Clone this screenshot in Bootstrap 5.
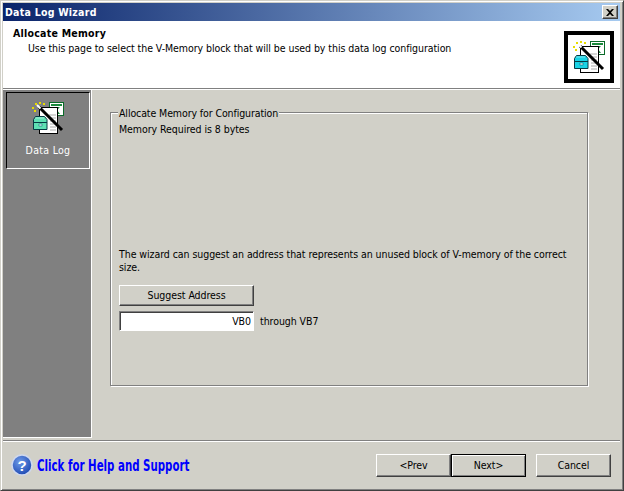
<!DOCTYPE html>
<html lang="en">
<head>
<meta charset="utf-8">
<title>Data Log Wizard</title>
<link href="https://cdn.jsdelivr.net/npm/bootstrap@5.3.0/dist/css/bootstrap.min.css" rel="stylesheet">
<style>
html,body{margin:0;height:491px;overflow:hidden;background:#d1d0c8}
body{font:10.5px/13px "DejaVu Sans Condensed","Liberation Sans",sans-serif;letter-spacing:-.06px;color:#000;-webkit-font-smoothing:none}
.wiz-win{width:624px;height:491px;background:#d1d0c8;border:1px solid;border-color:#d1d0c8 #404040 #404040 #d1d0c8;box-shadow:inset 1px 1px 0 #fff,inset -1px -1px 0 #808080;padding:2px 3px 2px 2px}
.wiz-title{height:18px;flex:none;background:linear-gradient(90deg,#0a246a,#a6caf0);color:#fff;font-weight:700;padding:0 2px 0 2px;letter-spacing:.25px}
.wiz-close{width:16px;height:14px;background:#d1d0c8;border:1px solid;border-color:#fff #404040 #404040 #fff;box-shadow:inset -1px -1px 0 #808080}
.wiz-head{height:67px;flex:none;background:#fff;padding:6px 6px 0 10px}
.wiz-head b{display:block;margin-bottom:2px;letter-spacing:.25px}
.wiz-head .wiz-sub{padding-left:15px}
.wiz-logo{width:50px;height:52px;border:4px solid #000;background:#fff;margin:4px 0 0}
.wiz-rule{height:2px;flex:none;background:#808080;border-bottom:1px solid #fff}
.wiz-main{min-height:0}
.wiz-side{width:89px;flex:none;background:#808080;border-right:1px solid #fff;border-bottom:1px solid #fff;padding:2px 2px 0 3px;margin-bottom:2px}
.wiz-item{height:77px;border:1px solid;border-color:#000 #fff #fff #000;color:#fff;padding-top:9px;width:84px}
.wiz-item span{margin-top:10px;letter-spacing:.3px}
.wiz-pane{padding:22px 32px 52px 18px}
.wiz-group{height:274px;border:1px solid #808080;box-shadow:inset 1px 1px 0 #fff,1px 1px 0 #fff;padding:10px 8px 0}
.wiz-legend{position:absolute;top:-6px;left:7px;background:#d1d0c8;padding:0 1px;letter-spacing:-.1px}
.wiz-gap{height:112px}
.wiz-btn.btn{font:inherit;letter-spacing:inherit;color:#000;background:#d1d0c8;border:1px solid;border-color:#fff #404040 #404040 #fff;border-radius:0;box-shadow:inset -1px -1px 0 #808080;padding:0}
.wiz-suggest.btn{width:135px;height:21px;margin-top:11px;display:block}
.wiz-row{margin-top:5px}
.wiz-row span{margin-left:6px}
.wiz-input.form-control{width:135px;height:20px;font:inherit;letter-spacing:inherit;text-align:right;padding:0 2px;border:1px solid;border-color:#808080 #fff #fff #808080;border-radius:0;box-shadow:inset 1px 1px 0 #404040;background:#fff;color:#000}
.wiz-foot{height:46px;flex:none;padding:12px 9px 0 8px}
.wiz-help{color:#00f;font:700 16.5px/21px "DejaVu Sans Condensed","Liberation Sans Narrow",sans-serif;letter-spacing:0;display:inline-block;transform:scaleX(.69);transform-origin:0 50%;white-space:nowrap;margin-top:1px}
.wiz-nav.btn{width:75px;height:23px}
.wiz-nav.wiz-def{outline:1px solid #000;outline-offset:-1px;border-color:#000;box-shadow:inset 1px 1px 0 #fff,inset -1px -1px 0 #808080}
.wiz-space{margin-left:10px}
.wiz-teal{color:#5fe0b4}
.wiz-cyan{color:#19d3e6}
</style>
</head>
<body>
<svg width="0" height="0" class="position-absolute">
<symbol id="wand" viewBox="0 0 32 32">
<rect x="17.500" y=".5" width="14" height="13" fill="#fff" stroke="#0a6a28"/>
<path d="M19 2h11v2H19zM20 5h2l2 2 2-2h2l-3 3 3 4h-2l-2-2-2 2h-2l3-4z" fill="#1a8a3c"/>
<rect x="7.500" y="5.500" width="18" height="26" fill="#fff" stroke="#000"/>
<path d="M17 13h7M17 16h7M18 19h6M18 22h6M18 25h6M18 28h6" stroke="#aaa"/>
<path d="M7 0h2v2H7zM3 1h2v2H3zM11 1h2v2h-2zM0 5h2v2H0zM2 8h2v2H2zM9 7h2v2H9z" fill="#e8dc00"/>
<path d="M1.500 17.500l2-3h9l2.500 3v10H1.500z" fill="currentColor" stroke="#063a44"/>
<path d="M1.500 20.500h13.500" stroke="#063a44"/>
<path d="M3 16h9" stroke="#fff" stroke-opacity=".45"/>
<rect x="7" y="22" width="3" height="2" fill="#d8fbff" stroke="#06505e" stroke-width=".5"/>
<path d="M7 5l23 23" stroke="#000" stroke-width="3"/>
<path d="M5 3l3.500 3.500" stroke="#fff" stroke-width="2"/>
</symbol>
</svg>
<div class="wiz-win d-flex flex-column">
<div class="wiz-title d-flex align-items-center justify-content-between">
<span>Data Log Wizard</span>
<span class="wiz-close d-flex align-items-center justify-content-center">
<svg width="8" height="7" viewBox="0 0 8 7"><path d="M0 0h2l2 2 2-2h2L5 3.500 8 7H6L4 5 2 7H0l3-3.500z" fill="#000"/></svg>
</span>
</div>
<div class="wiz-head d-flex justify-content-between">
<div>
<b>Allocate Memory</b>
<div class="wiz-sub">Use this page to select the V-Memory block that will be used by this data log configuration</div>
</div>
<div class="wiz-logo d-flex align-items-center justify-content-center wiz-cyan">
<svg width="32" height="32"><use href="#wand"/></svg>
</div>
</div>
<div class="wiz-rule"></div>
<div class="wiz-main d-flex flex-grow-1">
<div class="wiz-side">
<div class="wiz-item d-flex flex-column align-items-center">
<svg width="32" height="32" class="wiz-teal"><use href="#wand"/></svg>
<span>Data Log</span>
</div>
</div>
<div class="wiz-pane flex-grow-1">
<div class="wiz-group position-relative">
<span class="wiz-legend">Allocate Memory for Configuration</span>
<div>Memory Required is 8 bytes</div>
<div class="wiz-gap"></div>
<div>The wizard can suggest an address that represents an unused block of V-memory of the correct size.</div>
<button type="button" class="btn wiz-btn wiz-suggest">Suggest Address</button>
<div class="d-flex align-items-center wiz-row">
<input class="form-control wiz-input" value="VB0" readonly>
<span>through VB7</span>
</div>
</div>
</div>
</div>
<div class="wiz-rule"></div>
<div class="wiz-foot d-flex align-items-start">
<svg width="22" height="22" viewBox="0 0 22 22" class="me-1"><defs><radialGradient id="hb" cx=".4" cy=".35" r=".7"><stop offset="0" stop-color="#6f9be8"/><stop offset="1" stop-color="#1a45b0"/></radialGradient></defs><circle cx="11" cy="11" r="10" fill="url(#hb)" stroke="#cfd8ee" stroke-width="1.500"/><text x="11" y="16.500" text-anchor="middle" font-family="Liberation Sans" font-weight="700" font-size="15" fill="#fff">?</text></svg>
<span class="wiz-help">Click for Help and Support</span>
<div class="ms-auto d-flex">
<button type="button" class="btn wiz-btn wiz-nav">&lt;Prev</button>
<button type="button" class="btn wiz-btn wiz-nav wiz-def">Next&gt;</button>
<button type="button" class="btn wiz-btn wiz-nav wiz-space">Cancel</button>
</div>
</div>
</div>
<script src="https://cdn.jsdelivr.net/npm/bootstrap@5.3.0/dist/js/bootstrap.bundle.min.js"></script>
</body>
</html>
